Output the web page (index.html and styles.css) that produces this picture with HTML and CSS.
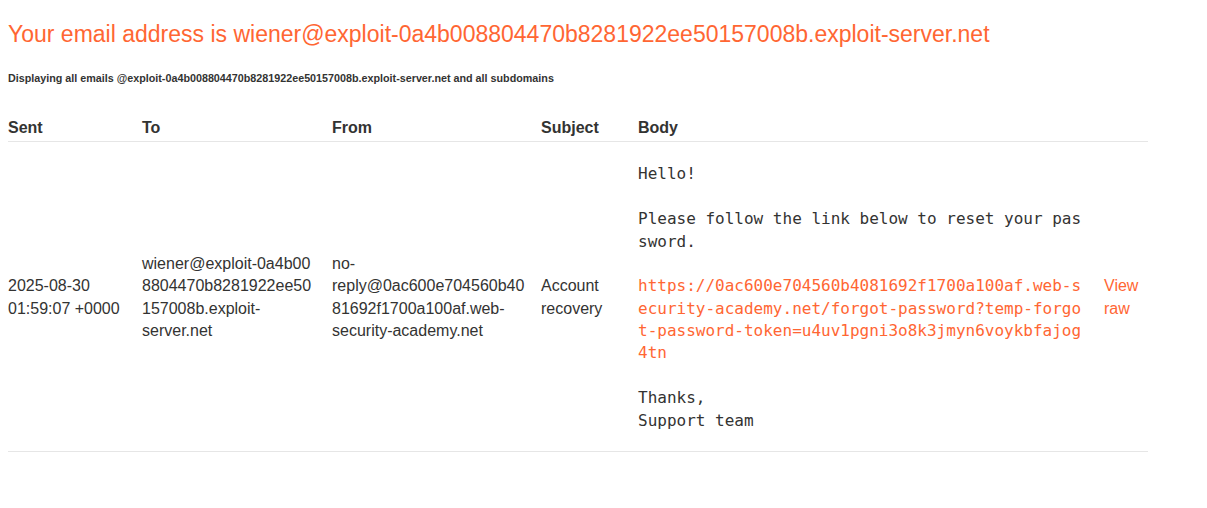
FILE: index.html
```html
<!DOCTYPE html>
<html>
<head>
<meta charset="utf-8">
<link rel="stylesheet" href="styles.css">
</head>
<body>
<h1 class="title">Your email address is wiener@exploit-0a4b008804470b8281922ee50157008b.exploit-server.net</h1>
<h6 class="sub">Displaying all emails @exploit-0a4b008804470b8281922ee50157008b.exploit-server.net and all subdomains</h6>
<table class="emails">
<colgroup>
<col class="c-sent"><col class="c-to"><col class="c-from"><col class="c-subj"><col class="c-body"><col class="c-raw">
</colgroup>
<thead>
<tr><th>Sent</th><th>To</th><th>From</th><th>Subject</th><th>Body</th><th></th></tr>
</thead>
<tbody>
<tr>
<td>2025-08-30 01:59:07 +0000</td>
<td>wiener@exploit-&#8288;0a4b008804470b8281922ee50157008b.exploit-server.net</td>
<td>no-reply@0ac600e704560b4081692f1700a100af.web-security-academy.net</td>
<td>Account recovery</td>
<td><pre class="body">Hello!

Please follow the link below to reset your password.

<a href="#">https://0ac600e704560b4081692f1700a100af.web-security-academy.net/forgot-password?temp-forgot-password-token=u4uv1pgni3o8k3jmyn6voykbfajog4tn</a>

Thanks,
Support team</pre></td>
<td><a href="#">View raw</a></td>
</tr>
</tbody>
</table>
</body>
</html>
```
FILE: styles.css
```css
body {
  margin: 8px;
  font-family: "Liberation Sans", Arial, sans-serif;
  color: #333332;
  background: #fff;
}
a {
  color: #ff6633;
  text-decoration: none;
}
.title {
  color: #ff6633;
  font-weight: normal;
  font-size: 23px;
  line-height: 1.15;
  margin: 13px 0 0 0;
}
.sub {
  font-size: 10.75px;
  font-weight: bold;
  margin: 23.5px 0 0 0;
  line-height: 14px;
}
.emails {
  margin-top: 27px;
  border-collapse: collapse;
  table-layout: fixed;
  width: 1140px;
  font-size: 16px;
  line-height: 1.4;
}
.c-sent { width: 134px; }
.c-to { width: 190px; }
.c-from { width: 209px; }
.c-subj { width: 97px; }
.c-body { width: 466px; }
.c-raw { width: 44px; }
th {
  text-align: left;
  font-weight: bold;
  padding: 5px 16px 2px 0;
  border-bottom: 1px solid #e6e6e6;
}
td {
  padding: 5px 16px 3px 0;
  vertical-align: middle;
  overflow-wrap: break-word;
  border-bottom: 1px solid #e6e6e6;
}
td:last-child, th:last-child { padding-right: 0; }
.body {
  font-family: "DejaVu Sans Mono", monospace;
  font-size: 16px;
  line-height: 1.4;
  white-space: pre-wrap;
  word-break: break-all;
  margin: 16px 0;
}
```
